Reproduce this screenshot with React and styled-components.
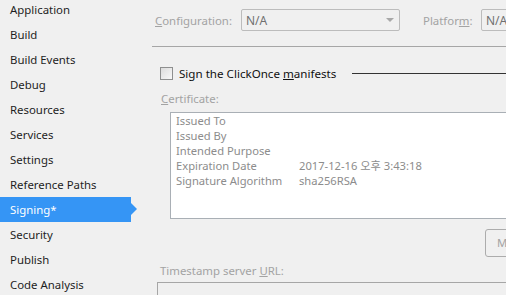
import React from 'react';
import styled, { createGlobalStyle } from 'styled-components';

const GlobalStyle = createGlobalStyle`
  html, body {
    margin: 0;
    padding: 0;
    background: #f0f0f0;
    overflow: hidden;
  }
  body {
    font-family: "Segoe UI", "Noto Sans", "Noto Sans CJK KR", sans-serif;
    font-size: 11.4px;
  }
`

const Page = styled.div`
  display: flex;
  flex-direction: row;
  width: 506px;
  height: 295px;
  overflow: hidden;
`
const Sidebar = styled.ul`
  list-style: none;
  margin: -3px 0 0 0;
  padding: 0;
  width: 152px;
  flex-shrink: 0;
`
const NavItem = styled.li`
  position: relative;
  height: 25px;
  line-height: 25px;
  padding-left: 10px;
  width: 121px;
  color: ${p => (p.$active ? '#ffffff' : '#1e1e1e')};
  background: ${p => (p.$active ? '#3595f5' : 'transparent')};
  white-space: nowrap;

  &::after {
    content: '';
    display: ${p => (p.$active ? 'block' : 'none')};
    position: absolute;
    left: 131px;
    top: 6px;
    border-top: 6.5px solid transparent;
    border-bottom: 6.5px solid transparent;
    border-left: 6px solid #3595f5;
  }
`
const Content = styled.div`
  display: flex;
  flex-direction: column;
  width: 420px;
  flex-shrink: 0;

  & > * {
    flex-shrink: 0;
  }
`
const TopRow = styled.div`
  display: flex;
  align-items: center;
  margin-top: 9px;
  height: 22px;
`
const FieldLabel = styled.span`
  color: #a3a3a3;
  width: ${p => p.$width}px;
  margin-left: ${p => p.$left || 0}px;
  flex-shrink: 0;
  white-space: nowrap;
`
const Select = styled.div`
  display: flex;
  align-items: center;
  justify-content: space-between;
  box-sizing: border-box;
  width: ${p => p.$width}px;
  height: 22px;
  padding: 0 5px 0 4px;
  border: 1px solid #bcbcbc;
  border-radius: 2px;
  color: #707070;
  font-size: 12px;
  flex-shrink: 0;
`
const Caret = styled.span`
  width: 0;
  height: 0;
  border-left: 4px solid transparent;
  border-right: 4px solid transparent;
  border-top: 4px solid #a8a8a8;
`
const Separator = styled.div`
  height: 1px;
  background: #a6a6a6;
  margin-top: 15px;
`
const SignRow = styled.div`
  display: flex;
  align-items: center;
  margin-top: 20px;
  height: 13px;
  padding-left: 8px;
`
const CheckBox = styled.span`
  box-sizing: border-box;
  width: 13px;
  height: 13px;
  border: 1px solid #8e8f8f;
  background: linear-gradient(135deg, #dcdcdc, #f8f8f8);
  flex-shrink: 0;
`
const SignLabel = styled.span`
  margin-left: 6px;
  color: #111111;
  font-size: 11.6px;
  white-space: nowrap;
`
const GroupLine = styled.span`
  flex: 1;
  height: 1px;
  margin-left: 16px;
  background: #333333;
`
const BlockLabel = styled.div`
  color: #a3a3a3;
  line-height: 16px;
  margin-top: ${p => p.$top}px;
  padding-left: ${p => p.$left}px;
`
const CertBox = styled.div`
  box-sizing: border-box;
  margin: 5px 0 0 18px;
  height: 107px;
  border: 1px solid #a9afb5;
  background: #ffffff;
  padding: 0 0 0 5px;
  display: grid;
  grid-template-columns: 123px 1fr;
  grid-auto-rows: 15px;
  align-content: start;
  color: #8c8c8c;
  font-size: 11.2px;
  line-height: 15px;
  white-space: nowrap;
`
const ButtonRow = styled.div`
  display: flex;
  margin-top: 10px;
  padding-left: 333px;
`
const Button = styled.div`
  box-sizing: border-box;
  width: 90px;
  height: 28px;
  line-height: 26px;
  padding-left: 11px;
  border: 1px solid #acacac;
  border-radius: 3px;
  color: #a3a3a3;
  white-space: nowrap;
  flex-shrink: 0;
`
const UrlInput = styled.div`
  box-sizing: border-box;
  margin: 3px 0 0 5px;
  height: 22px;
  border: 1px solid #a6a6a6;
`

const navItems = [
  'Application', 'Build', 'Build Events', 'Debug', 'Resources', 'Services',
  'Settings', 'Reference Paths', 'Signing*', 'Security', 'Publish', 'Code Analysis',
]

const certRows = [
  ['Issued To', ''],
  ['Issued By', ''],
  ['Intended Purpose', ''],
  ['Expiration Date', '2017-12-16 오후 3:43:18'],
  ['Signature Algorithm', 'sha256RSA'],
]

const App = () => {
  return (
    <Page>
      <GlobalStyle />
      <Sidebar>
        {navItems.map(item => (
          <NavItem key={item} $active={item === 'Signing*'}>{item}</NavItem>
        ))}
      </Sidebar>
      <Content>
        <TopRow>
          <FieldLabel $width={86} $left={3}><u>C</u>onfiguration:</FieldLabel>
          <Select $width={159}>N/A<Caret /></Select>
          <FieldLabel $width={58} $left={23}>Platfor<u>m</u>:</FieldLabel>
          <Select $width={80}>N/A<Caret /></Select>
        </TopRow>
        <Separator />
        <SignRow>
          <CheckBox />
          <SignLabel>Sign the ClickOnce <u>m</u>anifests</SignLabel>
          <GroupLine />
        </SignRow>
        <BlockLabel $top={11} $left={9}><u>C</u>ertificate:</BlockLabel>
        <CertBox>
          {certRows.map(([k, v]) => (
            <React.Fragment key={k}>
              <span>{k}</span>
              <span>{v}</span>
            </React.Fragment>
          ))}
        </CertBox>
        <ButtonRow>
          <Button>More Details...</Button>
        </ButtonRow>
        <BlockLabel $top={6} $left={8}>Timestamp server <u>U</u>RL:</BlockLabel>
        <UrlInput />
      </Content>
    </Page>
  )
}

export default App
